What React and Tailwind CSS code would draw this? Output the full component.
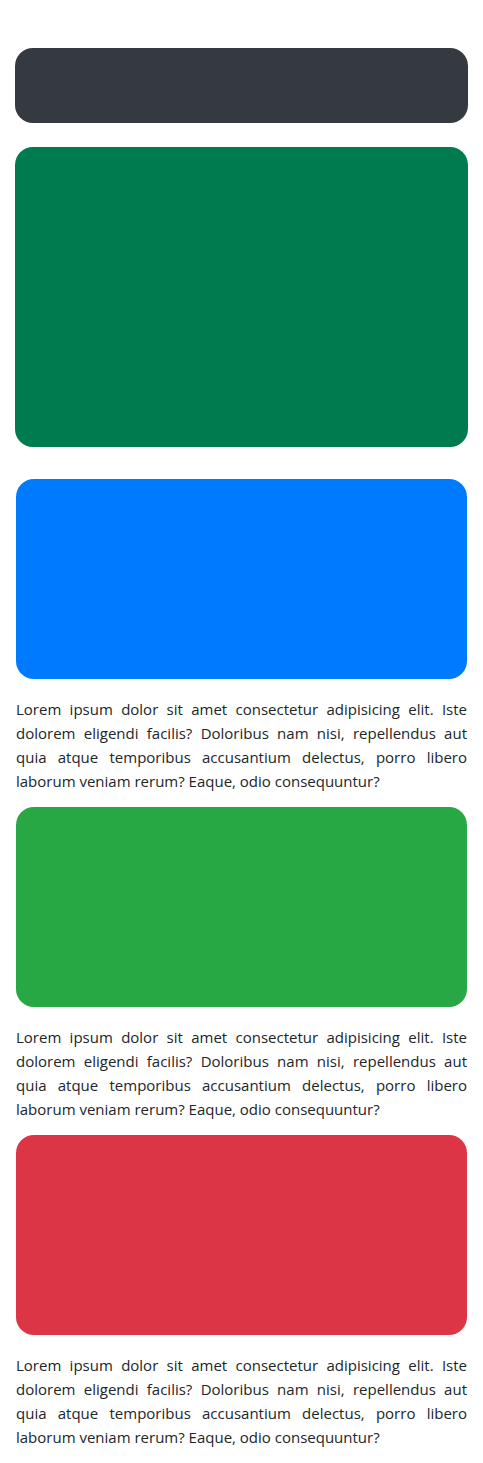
const lorem =
  'Lorem ipsum dolor sit amet consectetur adipisicing elit. Iste dolorem eligendi facilis? Doloribus nam nisi, repellendus aut quia atque temporibus accusantium delectus, porro libero laborum veniam rerum? Eaque, odio consequuntur?'

function Card({ color }) {
  return (
    <div>
      <div className={`h-[200px] rounded-[18px] ${color}`} />
      <p className="mt-[18px] mb-[14px] text-justify text-[15px] leading-6 text-[#212529]">{lorem}</p>
    </div>
  )
}

export default function App() {
  return (
    <div className="min-h-screen bg-white font-['Open_Sans',sans-serif]">
      <div className="px-[15px] pt-[48px]">
        <div className="h-[75px] rounded-[18px] bg-[#343a40]" />
        <div className="mt-6 h-[300px] rounded-[18px] bg-[#007b50]" />
      </div>
      <div className="px-4 pt-8">
        <Card color="bg-[#007bff]" />
        <Card color="bg-[#28a745]" />
        <Card color="bg-[#dc3545]" />
      </div>
    </div>
  )
}
